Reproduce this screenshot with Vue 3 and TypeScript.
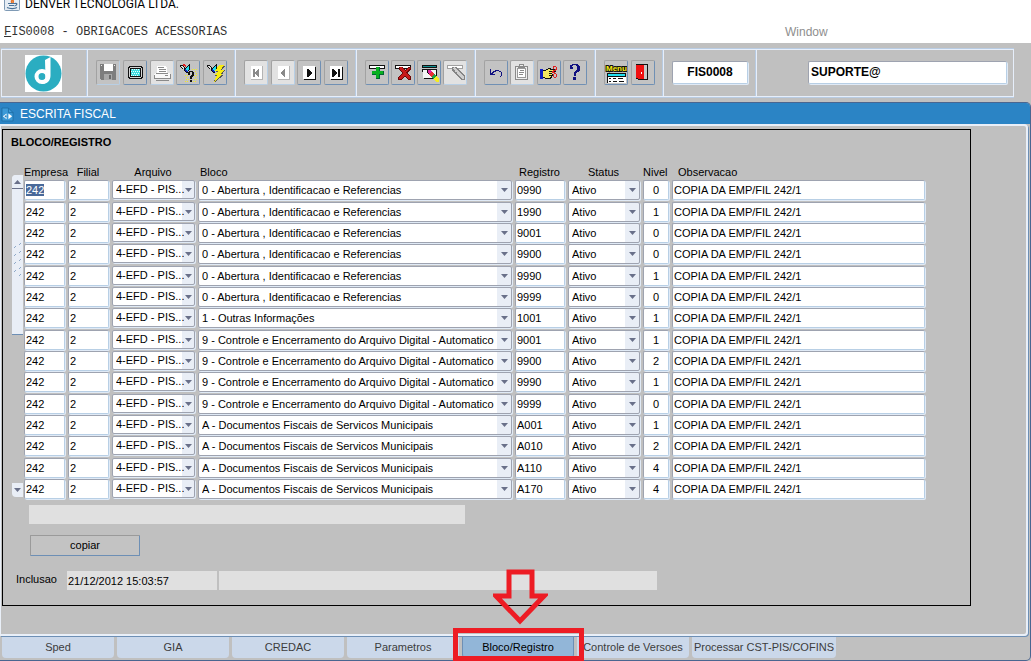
<script setup lang="ts">
import { onMounted, reactive, ref } from 'vue'

interface Registro {
  empresa: string
  filial: string
  arquivo: string
  bloco: string
  registro: string
  status: string
  nivel: string
  obs: string
}

interface Shape {
  d: string
  fill: string
}

interface ToolButton {
  label: string
  icon: string
  disabled?: boolean
}

const ARQUIVO = '4-EFD - PIS...'
const blocos = [
  '0 - Abertura , Identificacao e Referencias',
  '1 - Outras Informações',
  '9 - Controle e Encerramento do Arquivo Digital - Automatico',
  'A - Documentos Fiscais de Servicos Municipais',
]

const source: [number, string, string][] = [
  [0, '0990', '0'],
  [0, '1990', '1'],
  [0, '9001', '0'],
  [0, '9900', '0'],
  [0, '9990', '1'],
  [0, '9999', '0'],
  [1, '1001', '1'],
  [2, '9001', '1'],
  [2, '9900', '2'],
  [2, '9990', '1'],
  [2, '9999', '0'],
  [3, 'A001', '1'],
  [3, 'A010', '2'],
  [3, 'A110', '4'],
  [3, 'A170', '4'],
]

const rows = reactive<Registro[]>(
  source.map(([bloco, registro, nivel]) => ({
    empresa: '242',
    filial: '2',
    arquivo: ARQUIVO,
    bloco: blocos[bloco],
    registro,
    status: 'Ativo',
    nivel,
    obs: 'COPIA DA EMP/FIL 242/1',
  })),
)

const toolGroups: ToolButton[][] = [
  [
    { label: 'Salvar', icon: 'save', disabled: true },
    { label: 'Tela', icon: 'screen' },
    { label: 'Imprimir', icon: 'print', disabled: true },
    { label: 'Entrar consulta', icon: 'query' },
    { label: 'Executar consulta', icon: 'execute' },
  ],
  [
    { label: 'Primeiro', icon: 'first', disabled: true },
    { label: 'Anterior', icon: 'prev', disabled: true },
    { label: 'Proximo', icon: 'next' },
    { label: 'Ultimo', icon: 'last' },
  ],
  [
    { label: 'Inserir', icon: 'insert' },
    { label: 'Excluir', icon: 'remove' },
    { label: 'Limpar', icon: 'clear' },
    { label: 'Editar', icon: 'edit', disabled: true },
  ],
  [
    { label: 'Desfazer', icon: 'undo' },
    { label: 'Colar', icon: 'paste', disabled: true },
    { label: 'Recortar', icon: 'cut' },
    { label: 'Ajuda', icon: 'help' },
  ],
  [
    { label: 'Menu', icon: 'menu' },
    { label: 'Sair', icon: 'exit' },
  ],
]

const torch: Shape[] = [
  { d: 'M3 4h2l4 3-1 2-4-2z', fill: '#111' },
  { d: 'M4 5h1l3 2v1h-1l-3-2z', fill: '#e0e0e0' },
  { d: 'M12 3h1v5l-3 5-3-3v-3l3-1z', fill: '#111' },
  { d: 'M8 8h4l-2 4-2-2z', fill: '#1020c0' },
  { d: 'M12 4v4l-2 2-1-2z', fill: '#20e0f0' },
]

const pageGrey: Shape[] = [
  { d: 'M6 5h12v14h-12z', fill: '#b4b4b4' },
  { d: 'M6 5h11v13h-11z', fill: '#fff' },
]
const pageDark: Shape[] = [
  { d: 'M6 6h12v13h-12z', fill: '#111' },
  { d: 'M5 5h12v13h-12z', fill: '#fff' },
]

const icons: Record<string, Shape[]> = {
  save: [
    { d: 'M3 3h16v16h-15v-1h-1z', fill: '#7d7d7d' },
    { d: 'M7 3h9v7h-9z', fill: '#fff' },
    { d: 'M4 4h1v1h-1zM17 4h1v1h-1z', fill: '#eee' },
    { d: 'M7 13h8v6h-8z', fill: '#a8a8a8' },
    { d: 'M12 14h2v4h-2z', fill: '#6b6b6b' },
  ],
  screen: [
    { d: 'M5 5h13v1h1v11h-1v1h-13v-1h-1v-11h1z', fill: '#111' },
    { d: 'M6 6h11v1h1v9h-1v1h-11v-1h-1v-9h1z', fill: '#d4d4d4' },
    { d: 'M6 7h11v9h-11z', fill: '#111' },
    { d: 'M7 8h9v7h-9z', fill: '#3fdce0' },
    { d: 'M8 8h1v1h-1zM10 8h1v1h-1zM12 8h1v1h-1zM14 8h1v1h-1zM7 10h1v1h-1zM9 10h1v1h-1zM11 10h1v1h-1zM13 10h1v1h-1zM15 10h1v1h-1zM8 12h1v1h-1zM10 12h1v1h-1zM12 12h1v1h-1zM14 12h1v1h-1zM7 14h1v1h-1zM9 14h1v1h-1zM11 14h1v1h-1zM13 14h1v1h-1z', fill: '#e8ffff' },
  ],
  print: [
    { d: 'M6 5h9v1h1v6h-10z', fill: '#fff' },
    { d: 'M7 6h6v1h-6zM8 8h7v1h-7zM8 10h7v1h-7z', fill: '#8a8a8a' },
    { d: 'M4 12h15v5h-16v-4h1z', fill: '#f8f8f8' },
    { d: 'M5 12h12v1h-12zM3 17h17v1h-17zM19 13h1v4h-1zM3 14h1v3h-1zM14 14h3v1h-3zM5 19h13v1h-13z', fill: '#8a8a8a' },
  ],
  query: [
    { d: 'M6 3h2v1h1v2h-1v-1h-2z', fill: '#e02020' },
    ...torch,
    { d: 'M15 8h1v1h-1zM17 8h1v1h-1zM19 8h1v1h-1zM8 14h1v1h-1zM10 14h1v1h-1zM18 10h1v1h-1zM9 16h1v1h-1zM17 14h1v1h-1zM19 12h1v1h-1zM19 14h1v1h-1zM18 16h1v1h-1zM9 18h1v1h-1zM11 18h1v1h-1zM17 18h1v1h-1zM19 18h1v1h-1zM8 20h1v1h-1zM10 20h1v1h-1zM16 20h1v1h-1zM18 20h1v1h-1z', fill: '#f4ec20' },
    { d: 'M12 10h4v1h1v4h-1v1h-1v2h-2v-3h1v-1h1v-3h-2v3h-2v-3h1zM13 19h2v2h-2z', fill: '#111' },
  ],
  execute: [
    ...torch,
    { d: 'M16 5h5l-3 4h3l-3 5h2l-9 7-1-1 3-5h-2l3-4h-2z', fill: '#555' },
    { d: 'M15 4h5l-3 5h3l-3 4h2l-9 8 3-7h-2l3-4h-3z', fill: '#f8ec10' },
  ],
  first: [...pageGrey, { d: 'M8 8h2v8h-2zM14 8v8h-1v-1h-1v-1h-1v-1h-1v-2h1v-1h1v-1h1v-1z', fill: '#8a8a8a' }],
  prev: [...pageGrey, { d: 'M13 8v8h-1v-1h-1v-1h-1v-1h-1v-2h1v-1h1v-1h1v-1z', fill: '#8a8a8a' }],
  next: [...pageDark, { d: 'M9 8h2v1h1v1h1v1h1v2h-1v1h-1v1h-1v1h-2z', fill: '#111' }],
  last: [...pageDark, { d: 'M7 8h2v1h1v1h1v1h1v2h-1v1h-1v1h-1v1h-2zM13 8h2v8h-2z', fill: '#111' }],
  insert: [
    { d: 'M3 4h16v4h-16z', fill: '#111' },
    { d: 'M4 5h14v2h-14z', fill: '#fff' },
    { d: 'M10 6h4v4h4v4h-4v4h-4v-4h-4v-4h4z', fill: '#063' },
    { d: 'M10 6h3v4h4v3h-4v4h-3v-4h-4v-3h4z', fill: '#08b020' },
  ],
  remove: [
    { d: 'M3 4h16v4h-16z', fill: '#111' },
    { d: 'M4 5h14v2h-14z', fill: '#fff' },
    { d: 'M7 6h4l2 3 3-3h3v2l-4 4 4 4v3h-3l-3-4-3 4h-4v-3l4-4-3-4z', fill: '#6a0808' },
    { d: 'M8 6h2l3 4 3-3h2l-4 5 4 4v2h-2l-3-4-4 4h-2v-2l4-4-3-4z', fill: '#c81818' },
  ],
  clear: [
    { d: 'M4 4h15v3h-15zM4 8h2v3h-2z', fill: '#111' },
    { d: 'M5 5h13v1h-13z', fill: '#109090' },
    { d: 'M6 8h13v10h-13z', fill: '#111' },
    { d: 'M5 9h13v8h-13z', fill: '#f4f4f4' },
    { d: 'M9 9h4l8 9v3h-3l-9-9z', fill: '#111' },
    { d: 'M10 9h3l1 2-3 2-1-2z', fill: '#e020a0' },
    { d: 'M14 11l2 2-3 3-2-3z', fill: '#e83030' },
    { d: 'M16 13l2 2-3 3-2-2z', fill: '#20a040' },
    { d: 'M18 15l3 3v3h-3l-3-3z', fill: '#f4ec20' },
  ],
  edit: [
    { d: 'M3 4h16v4h-16z', fill: '#a0a0a0' },
    { d: 'M4 5h14v2h-14z', fill: '#fff' },
    { d: 'M8 6h4l9 9v4h-3l-10-9z', fill: '#858585' },
    { d: 'M10 6h1l9 10v2h-2l-5-5v-2h-2v-2l-2-1z', fill: '#cfcfcf' },
  ],
  undo: [
    { d: 'M5 8h1v4h1v-1h1v-1h2v-1h4v1h2v1h1v4h-1v1h-1v-1h1v-4h-2v-1h-3v1h-2v1h-1v1h2v1h-5z', fill: '#101080' },
  ],
  paste: [
    { d: 'M4 5h4v-2h5v2h4v14h-13z', fill: '#8a8a8a' },
    { d: 'M5 6h11v12h-11z', fill: '#eee' },
    { d: 'M6 7h9v10h-9z', fill: '#9a9a9a' },
    { d: 'M7 8h7v8h-7z', fill: '#fff' },
    { d: 'M7 5h7v2h-7zM9 9h4v1h-4zM8 11h5v1h-5zM8 13h4v1h-4z', fill: '#8a8a8a' },
    { d: 'M9 4h3v1h-3z', fill: '#eee' },
  ],
  cut: [
    { d: 'M2 8h3v10h-3z', fill: '#1020c0' },
    { d: 'M5 9h3v-1h2v-1h3v1h5v3h-4v2h1v2h-1v2h-1v1h-6v-1h-2z', fill: '#111' },
    { d: 'M5 10h3v-1h2v-1h2v1h5v1h-6v1h3v1h-3v1h3v1h-3v1h2v1h-1v1h-5v-1h-2z', fill: '#f4e860' },
    { d: 'M15 5h3v1h1v3h-1v1h-3v-1h2v-1h1v-2h-2v2h-1zM14 10h2v1h1v1h1v1h1v3h-1v1h-2v-1h-1v-3h1v3h2v-3h-2v-1h-2z', fill: '#e02020' },
  ],
  help: [
    { d: 'M8 3h6v1h1v1h1v5h-1v1h-2v1h-1v3h-2v-4h1v-1h1v-1h1v-4h-1v-1h-3v1h-1v1h1v2h-3v-4h2zM9 16h3v3h-3z', fill: '#101080' },
  ],
  menu: [
    { d: 'M2 12h19v10h-19z', fill: '#111' },
    { d: 'M3 13h17v2h-17z', fill: '#20e0f0' },
    { d: 'M3 16h18v6h-18z', fill: '#fff' },
    { d: 'M4 17h2v1h-2zM8 17h3v1h-3zM13 17h5v1h-5zM4 20h2v1h-2zM8 20h4v1h-4zM14 20h5v1h-5z', fill: '#111' },
  ],
  exit: [
    { d: 'M4 3h12v16h-10v-1h-2z', fill: '#111' },
    { d: 'M12 4h3v14h-3z', fill: '#c8c8c8' },
    { d: 'M4 4h8v14h-5l-3-1z', fill: '#f01010' },
    { d: 'M9 11h1v2h-1z', fill: '#fff' },
  ],
}

const tabs = ['Sped', 'GIA', 'CREDAC', 'Parametros', 'Bloco/Registro', 'Controle de Versoes', 'Processar CST-PIS/COFINS']
const activeTab = ref('Bloco/Registro')
const programa = ref('FIS0008')
const usuario = ref('SUPORTE@')
const inclusao = ref('21/12/2012 15:03:57')
const grid = ref<HTMLTableElement | null>(null)

onMounted(() => {
  const first = grid.value?.querySelector('input')
  first?.focus()
  first?.select()
})
</script>

<template>
  <div class="app">
    <header class="titlebar">
      <svg class="java" viewBox="0 0 16 16" aria-hidden="true">
        <rect x="0.5" y="0.5" width="15" height="15" rx="1" fill="#e6edf4" stroke="#7f9ab5" />
        <path d="M8 3c2 2-2 2 0 5M10 4c-2 1 0 2-1 4" fill="none" stroke="#e8762c" stroke-width="1.5" />
        <path d="M4 8.500h7M5 10.500h5M11 8.500c3-.5 2 2-.5 2.500M3 12.500c3 1.500 8 1.300 10 0" fill="none" stroke="#4a7196" stroke-width="1.2" />
      </svg>
      <span>DENVER TECNOLOGIA LTDA.</span>
    </header>
    <nav class="menubar">
      <a href="#" class="menu-main"><u>F</u>IS0008 - OBRIGACOES ACESSORIAS</a>
      <a href="#" class="menu-window">Window</a>
    </nav>

    <div class="desk">
      <div class="toolbar">
        <div class="cell logo-cell">
          <svg class="logo" viewBox="0 0 37 37" role="img" aria-label="Denver">
            <rect width="37" height="37" fill="#fff" />
            <circle cx="18.500" cy="18.500" r="18" fill="#2badc1" />
            <circle cx="17" cy="21.500" r="5.500" fill="none" stroke="#fff" stroke-width="4" />
            <path d="M20 5l5.500-3v18.500c0 5-3 9-9 8.500l4-6z" fill="#fff" />
            <path d="M14.500 23c0-3 2-4.500 4.500-4 .5 3-1.500 5.500-4 5z" fill="#2badc1" />
          </svg>
        </div>
        <div v-for="(group, g) in toolGroups" :key="g" class="cell tools">
          <button
            v-for="tool in group"
            :key="tool.icon"
            type="button"
            class="tool"
            :class="{ pale: tool.disabled && tool.icon !== 'save' }"
            :disabled="tool.disabled"
            :aria-label="tool.label"
          >
            <svg viewBox="0 0 22 23" shape-rendering="crispEdges" aria-hidden="true">
              <path v-for="(shape, s) in icons[tool.icon]" :key="s" :d="shape.d" :fill="shape.fill" />
              <text v-if="tool.icon === 'menu'" x="1" y="10" class="menu-word">Menu</text>
            </svg>
          </button>
        </div>
        <div class="cell program-cell">
          <input v-model="programa" class="field program" aria-label="Programa" />
        </div>
        <div class="cell user-cell">
          <input v-model="usuario" class="field user" aria-label="Usuario" />
        </div>
      </div>

      <section class="window">
        <h1 class="caption">
          <svg viewBox="0 0 14 16" aria-hidden="true">
            <path d="M1 1h7l5 5v9h-12z" fill="#3c9ad8" stroke="#1f6fa8" />
            <path d="M8 1v5h5" fill="none" stroke="#1f6fa8" />
            <path d="M6 7v6l-4-3zM8 7v6l4-3z" fill="#fff" />
            <path d="M4 9h2v2h-2z" fill="#2b83c3" />
          </svg>
          ESCRITA FISCAL
        </h1>
        <div class="canvas">
          <div class="panel">
            <h2>BLOCO/REGISTRO</h2>
            <div class="records">
              <div class="scroll" aria-hidden="true">
                <div class="track">
                  <button type="button" tabindex="-1" class="scroll-up">
                    <svg viewBox="0 0 7 4"><path d="M0 4l3.500-4 3.500 4z" fill="#697089" /></svg>
                  </button>
                  <svg class="grip" viewBox="0 0 10 36">
                    <path d="M1 7l2-2M6 4l2-2M1 15l2-2M6 12l2-2M1 23l2-2M6 20l2-2M1 31l2-2M6 28l2-2M6 35l2-2" stroke="#8fa9c8" />
                  </svg>
                </div>
                <button type="button" tabindex="-1" class="scroll-down">
                  <svg viewBox="0 0 7 4"><path d="M0 0h7l-3.500 4z" fill="#697089" /></svg>
                </button>
              </div>
              <table ref="grid">
                <colgroup>
                  <col class="c-empresa" /><col class="c-filial" /><col class="c-arquivo" /><col class="c-bloco" />
                  <col class="c-registro" /><col class="c-status" /><col class="c-nivel" /><col />
                </colgroup>
                <thead>
                  <tr>
                    <th>Empresa</th>
                    <th class="mid">Filial</th>
                    <th class="mid">Arquivo</th>
                    <th class="in-2">Bloco</th>
                    <th class="in-4">Registro</th>
                    <th class="mid">Status</th>
                    <th>Nivel</th>
                    <th class="in-6">Observacao</th>
                  </tr>
                </thead>
                <tbody>
                  <tr v-for="(row, i) in rows" :key="i">
                    <td><input v-model="row.empresa" class="field" aria-label="Empresa" /></td>
                    <td><input v-model="row.filial" class="field" aria-label="Filial" /></td>
                    <td>
                      <div class="combo short">
                        <select v-model="row.arquivo" aria-label="Arquivo">
                          <option>{{ ARQUIVO }}</option>
                        </select>
                        <svg viewBox="0 0 7 4"><path d="M0 0h7l-3.500 4z" fill="#697089" /></svg>
                      </div>
                    </td>
                    <td>
                      <div class="combo">
                        <select v-model="row.bloco" aria-label="Bloco">
                          <option v-for="bloco in blocos" :key="bloco">{{ bloco }}</option>
                        </select>
                        <svg viewBox="0 0 7 4"><path d="M0 0h7l-3.500 4z" fill="#697089" /></svg>
                      </div>
                    </td>
                    <td><input v-model="row.registro" class="field" aria-label="Registro" /></td>
                    <td>
                      <div class="combo">
                        <select v-model="row.status" aria-label="Status">
                          <option>Ativo</option>
                          <option>Inativo</option>
                        </select>
                        <svg viewBox="0 0 7 4"><path d="M0 0h7l-3.500 4z" fill="#697089" /></svg>
                      </div>
                    </td>
                    <td><input v-model="row.nivel" class="field centered" aria-label="Nivel" /></td>
                    <td class="last"><input v-model="row.obs" class="field" aria-label="Observacao" /></td>
                  </tr>
                </tbody>
              </table>
            </div>
            <input class="plain note" readonly aria-label="Descricao" />
            <button type="button" class="copy">copiar</button>
            <div class="audit">
              <label for="inclusao">Inclusao</label>
              <input id="inclusao" v-model="inclusao" class="plain date" readonly />
              <input class="plain who" readonly aria-label="Usuario da inclusao" />
            </div>
          </div>
        </div>
        <div class="tabs" role="tablist">
          <div v-for="tab in tabs" :key="tab" class="tab-slot">
            <button
              type="button"
              role="tab"
              class="tab"
              :class="{ active: tab === activeTab }"
              :aria-selected="tab === activeTab"
              @click="activeTab = tab"
            >
              {{ tab }}
            </button>
            <template v-if="tab === 'Bloco/Registro'">
              <svg class="arrow" viewBox="0 0 55 57" aria-hidden="true">
                <path d="M16 3h23v24h12l-24 25-24-25h13z" fill="none" stroke="#ed1c24" stroke-width="5" />
              </svg>
              <span class="frame"></span>
            </template>
          </div>
        </div>
      </section>
    </div>
  </div>
</template>

<style>
body {
  margin: 0;
  background: #fff;
}
</style>

<style scoped>
.app,
.app * {
  box-sizing: border-box;
}

.app {
  display: flex;
  flex-direction: column;
  min-height: 100vh;
  font: 11px/13px "Liberation Sans", Arial, sans-serif;
  color: #000;
}

button,
input,
select {
  margin: 0;
  font: inherit;
  color: inherit;
  outline: none;
}

.titlebar {
  display: flex;
  align-items: flex-end;
  gap: 5px;
  height: 12px;
  padding-left: 4px;
  font: 12px/16px Roboto, "Noto Sans", sans-serif;
}

.java {
  width: 16px;
  height: 16px;
  margin-bottom: 1px;
  flex: none;
}

.menubar {
  display: grid;
  grid-template-columns: 781px 1fr;
  align-items: center;
  height: 31px;
  padding: 8px 0 0 4px;
}

.menubar a {
  text-decoration: none;
}

.menu-main {
  font: 12px/14px "Liberation Mono", "Courier New", monospace;
  color: #333;
}

.menu-window {
  font-size: 12px;
  line-height: 14px;
  color: #8e8e8e;
}

.desk {
  display: flex;
  flex: 1;
  flex-direction: column;
  gap: 5px;
  padding-top: 6px;
  background: #c0c0c0;
}

.toolbar {
  display: grid;
  grid-template-columns: 85px 148px 121px 119px 120px 68px 93px 1fr;
  height: 48px;
  margin: 0 17px 0 1px;
  border: 1px solid #e6eefa;
  box-shadow: 0 -1px #b8cbe2, 0 1px #b8cbe2;
}

.cell {
  display: flex;
  align-items: center;
  padding: 0 8px 2px;
}

.cell + .cell {
  border-left: 1px solid #e6eefa;
  box-shadow: -1px 0 #b8cbe2;
}

.cell.logo-cell {
  justify-content: center;
  padding: 0 2px 0 0;
}

.logo {
  width: 37px;
  height: 37px;
}

.tools {
  justify-content: space-between;
}

.tool {
  width: 24px;
  height: 25px;
  padding: 0;
  border: 1px solid #a2a2a2;
  border-right-color: #7090b4;
  border-bottom-color: #7090b4;
  border-radius: 2px;
  background: #c3c3c3;
}

.tool:disabled {
  border-right-color: #b8cfe5;
  border-bottom-color: #b8cfe5;
}

.tool.pale {
  background: #e2e2e2;
}

.tool svg {
  display: block;
  width: 22px;
  height: 23px;
}

.menu-word {
  font: bold 8px "Liberation Sans", Arial, sans-serif;
  fill: #f8ec10;
  stroke: #111;
  stroke-width: 2px;
  paint-order: stroke;
}

.field {
  display: block;
  width: 100%;
  height: 20px;
  padding: 0 1px;
  border: 1px solid #9ea3b0;
  border-right-color: #b8cfe5;
  border-bottom-color: #b8cfe5;
  border-radius: 2px;
  background: #fff;
  box-shadow: 1px 1px #e0eaf6;
}

.field::selection {
  color: #fff;
  background: #49699a;
}

.program,
.user {
  height: 23px;
  font-size: 12px;
  font-weight: bold;
}

.program {
  text-align: center;
}

.cell.user-cell {
  padding: 0 6px 2px 51px;
}

.user {
  padding-left: 2px;
}

.window {
  display: flex;
  flex: 1;
  flex-direction: column;
  border: solid #4a6690;
  border-width: 1px 1px 1px 0;
  border-radius: 0 5px 5px 0;
}

.caption {
  display: flex;
  align-items: center;
  gap: 6px;
  height: 21px;
  margin: 0;
  padding: 1px 0 0 1px;
  border-radius: 0 4px 0 0;
  background: #2b84c5;
  color: #fff;
  font-size: 12px;
  font-weight: normal;
  line-height: 14px;
}

.caption svg {
  width: 13px;
  height: 15px;
}

.canvas {
  display: flex;
  flex: 1;
  margin-right: 2px;
  padding-top: 3px;
  border: 2px solid #e9eff8;
  border-left-width: 1px;
  border-radius: 0 4px 4px 0;
  box-shadow: 1px 1px #6d8fb5;
}

.panel {
  display: flex;
  flex: 1;
  flex-direction: column;
  align-items: flex-start;
  margin: 0 55px 28px 1px;
  padding: 6px 45px 14px 8px;
  border: 1px solid #000;
}

h2 {
  margin: 0;
  font-size: 11px;
  line-height: 13px;
}

.records {
  display: flex;
  align-self: stretch;
  margin-top: 17px;
}

.scroll {
  display: flex;
  flex: none;
  flex-direction: column;
  justify-content: space-between;
  width: 13px;
  padding: 9px 1px 3px;
}

.track {
  display: flex;
  flex-direction: column;
  align-items: center;
  gap: 52px;
  height: 160px;
  border-bottom: 1px solid #6d8fb5;
  border-radius: 4px 0 0 0;
  background: #e9eef6;
}

.scroll-up,
.scroll-down {
  display: flex;
  align-items: center;
  justify-content: center;
  width: 100%;
  height: 14px;
  padding: 0;
  border: 0;
  background: #e9eef6;
}

.scroll-up {
  border-bottom: 1px solid #697089;
  border-radius: 4px 0 0 0;
}

.scroll-down {
  border-radius: 0 0 0 4px;
}

.scroll svg {
  width: 7px;
  height: 4px;
}

.scroll .grip {
  width: 10px;
  height: 36px;
}

table {
  flex: 1;
  width: 100%;
  table-layout: fixed;
  border-collapse: collapse;
}

.c-empresa,
.c-filial {
  width: 44px;
}

.c-arquivo {
  width: 86px;
}

.c-bloco {
  width: 317px;
}

.c-registro {
  width: 53px;
}

.c-status {
  width: 75px;
}

.c-nivel {
  width: 29px;
}

th {
  height: 14px;
  padding: 0;
  font-weight: normal;
  text-align: left;
  vertical-align: top;
  white-space: nowrap;
}

th.mid {
  padding-right: 4px;
  text-align: center;
}

th.in-2 {
  padding-left: 2px;
}

th.in-4 {
  padding-left: 4px;
}

th.in-6 {
  padding-left: 6px;
}

tbody tr {
  height: 21px;
}

tbody tr:nth-child(3n + 1) {
  height: 22px;
}

td {
  height: 20px;
  padding: 0 3px 0 0;
  vertical-align: top;
}

td.last {
  padding-right: 0;
}

.centered {
  text-align: center;
}

.combo {
  display: grid;
  height: 20px;
  border: 1px solid #9ea3b0;
  border-radius: 2px;
  background: linear-gradient(#e9eef6, #e9eef6) right / 14px 100% no-repeat #fff;
  box-shadow: 1px 1px #e0eaf6;
}

.combo.short {
  height: 19px;
  background-size: 12px 100%;
}

.combo select {
  grid-area: 1 / 1;
  width: 100%;
  height: 100%;
  min-width: 0;
  padding: 0 10px 0 3px;
  border: 0;
  background: none;
  appearance: none;
}

.combo svg {
  grid-area: 1 / 1;
  align-self: center;
  justify-self: end;
  width: 7px;
  height: 4px;
  margin-right: 3px;
  pointer-events: none;
}

.combo.short svg {
  margin-right: 2px;
}

.plain {
  height: 19px;
  padding: 0 1px;
  border: 0;
  background: #e0e0e0;
}

.note {
  width: 436px;
  margin: 5px 0 0 18px;
}

.copy {
  width: 110px;
  height: 21px;
  margin: 11px 0 0 19px;
  padding: 0;
  border: 1px solid #9a9a9a;
  border-right-color: #6d8fb5;
  border-bottom-color: #6d8fb5;
  border-radius: 1px;
  background: #c3c3c3;
}

.audit {
  display: flex;
  gap: 2px;
  margin: 15px 0 0 5px;
}

.audit label {
  width: 49px;
  padding-top: 2px;
}

.date {
  width: 150px;
}

.who {
  width: 438px;
}

.tabs {
  display: flex;
  gap: 3px;
  height: 24px;
  padding: 1px 0 2px 2px;
}

.tab-slot {
  position: relative;
  display: flex;
}

.tab {
  width: 112px;
  padding: 0;
  border: 0;
  border-radius: 0 0 4px 4px;
  background: #cbd8ea;
  color: #3c3c3c;
  white-space: nowrap;
}

.tab-slot:last-child .tab {
  width: 144px;
}

.tab.active {
  border: solid #6d8fb5;
  border-width: 0 1px;
  background: #92b6d8;
  color: #000;
}

.frame {
  position: absolute;
  inset: -9px -10px -3px -9px;
  z-index: 1;
  border: 5px solid #ed1c24;
  pointer-events: none;
}

.arrow {
  position: absolute;
  bottom: 32px;
  left: 31px;
  width: 55px;
  height: 57px;
  pointer-events: none;
}
</style>
